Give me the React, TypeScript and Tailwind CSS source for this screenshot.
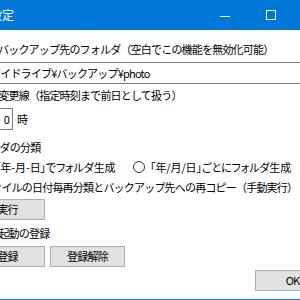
import React from 'react'

const FONT = { fontFamily: '"Noto Sans CJK JP", "Noto Sans", sans-serif' }

const TXT = 'text-[11px] tracking-[-0.8px] text-black leading-none whitespace-nowrap'
const PALT = 'text-[11px] tracking-[-0.1px] text-black leading-none whitespace-nowrap [font-feature-settings:"palt"]'
const BTN =
  'h-[21px] w-[75px] shrink-0 border border-[#adadad] bg-[#e1e1e1] text-[11px] tracking-[-0.8px] text-black leading-none'

function Radio({ checked }: { checked?: boolean }) {
  return (
    <span className="flex h-[12px] w-[12px] shrink-0 items-center justify-center rounded-full border border-[#333] bg-white">
      {checked && <span className="h-[6px] w-[6px] rounded-full bg-[#333]" />}
    </span>
  )
}

export default function App() {
  return (
    <div className="h-[300px] w-[300px] overflow-hidden bg-white" style={FONT}>
      <div className="-ml-[40px] flex h-[300px] w-[380px] flex-col border-b border-[#1a7cd6] bg-white">
        {/* title bar */}
        <div className="flex h-[30px] shrink-0 items-center justify-between bg-[#0078d7]">
          <span className="ml-[30px] text-[12px] leading-none text-white">設定</span>
          <div className="flex h-full">
            <div className="flex h-full w-[46px] items-center justify-center">
              <span className="mt-[2px] h-px w-[10px] bg-white" />
            </div>
            <div className="flex h-full w-[46px] items-center justify-center">
              <span className="h-[10px] w-[10px] border border-white" />
            </div>
            <div className="flex h-full w-[46px] items-center justify-center text-[14px] text-white">✕</div>
          </div>
        </div>

        <div className="flex flex-col pl-[10px] pr-[10px]">
          <div className={'mt-[10px] flex h-[18px] items-center pl-[28px] ' + TXT}>
            バックアップ先のフォルダ（空白でこの機能を無効化可能）
          </div>

          <div className={'mt-[4px] flex h-[22px] items-center border border-[#7a7a7a] bg-white pl-[19px] ' + TXT}>
            マイドライブ¥バックアップ¥photo
          </div>

          <div className={'mt-[2px] flex h-[18px] items-center pl-[8px] ' + TXT}>
            日付変更線（指定時刻まで前日として扱う）
          </div>

          <div className="mt-[4px] flex h-[22px] items-center">
            <div className={'ml-[13px] flex h-[22px] w-[30px] items-center justify-end border border-[#7a7a7a] pr-[3px] ' + TXT}>
              0
            </div>
            <span className={'ml-[4px] ' + TXT}>時</span>
          </div>

          <div className={'mt-[8px] flex h-[18px] items-center ' + TXT}>
            <span className="-ml-[1px]">フォルダの分類</span>
          </div>

          {/* folder mode radios */}
          <div className="mt-[2px] flex h-[18px] items-center">
            <div className="flex w-[163px] shrink-0 items-center">
              <span className="ml-[9px]"><Radio checked /></span>
              <span className={'ml-[4px] ' + PALT}>「年-月-日」でフォルダ生成</span>
            </div>
            <Radio />
            <span className={'ml-[5px] ' + PALT}>「年/月/日」ごとにフォルダ生成</span>
          </div>

          <div className={'mt-[2px] flex h-[18px] items-center pl-[11px] ' + TXT}>
            ファイルの日付毎再分類とバックアップ先への再コピー（手動実行）
          </div>

          <div className="mt-[3px] flex">
            <button className={BTN}>実行</button>
          </div>

          <div className={'mt-[4px] flex h-[18px] items-center pl-[8px] ' + TXT}>
            自動起動の登録
          </div>

          <div className="mt-[4px] flex gap-[5px]">
            <button className={BTN}>登録</button>
            <button className={BTN}>登録解除</button>
          </div>

          <div className="mt-[3px] flex justify-end">
            <button className={BTN}>OK</button>
          </div>
        </div>
      </div>
    </div>
  )
}
